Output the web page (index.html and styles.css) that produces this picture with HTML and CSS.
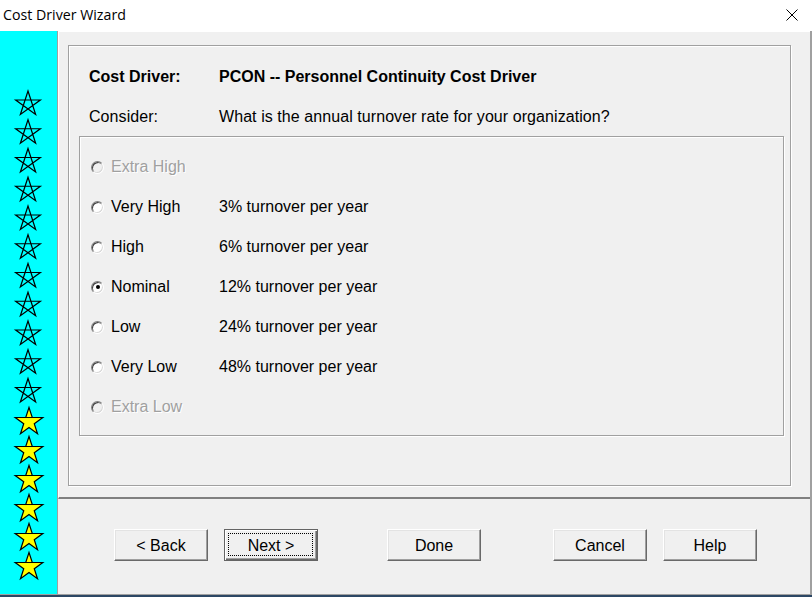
FILE: index.html
```html
<!DOCTYPE html>
<html>
<head>
<meta charset="utf-8">
<title>Cost Driver Wizard</title>
<link rel="stylesheet" href="styles.css">
</head>
<body>
<div class="window">
  <div class="titlebar">
    <span class="title">Cost Driver Wizard</span>
    <svg class="close" width="12" height="12" viewBox="0 0 12 12"><path d="M0.5 0.5 L11.5 11.5 M11.5 0.5 L0.5 11.5" stroke="#000" stroke-width="1" fill="none"/></svg>
  </div>
  <div class="body">
    <div class="sidebar">
      <svg class="stars" width="57" height="563" viewBox="0 0 57 563">
        <defs>
          <g id="ostar"><path d="M0,-13 L7.64,10.52 L-12.36,-4.02 L12.36,-4.02 L-7.64,10.52 Z" fill="none" stroke="#000" stroke-width="1.2" stroke-linejoin="miter"/></g>
          <g id="ystar"><path d="M0,-14.5 L3.26,-4.48 L13.79,-4.48 L5.27,1.71 L8.52,11.73 L0,5.54 L-8.52,11.73 L-5.27,1.71 L-13.79,-4.48 L-3.26,-4.48 Z" fill="#ffff00" stroke="#000" stroke-width="1.2"/><path d="M-13.3,-4.48 H13.3" stroke="#000" stroke-width="1"/></g>
        </defs>
        <use href="#ostar" transform="translate(28,73)"/>
        <use href="#ostar" transform="translate(28,101.75)"/>
        <use href="#ostar" transform="translate(28,130.5)"/>
        <use href="#ostar" transform="translate(28,159.25)"/>
        <use href="#ostar" transform="translate(28,188)"/>
        <use href="#ostar" transform="translate(28,216.75)"/>
        <use href="#ostar" transform="translate(28,245.5)"/>
        <use href="#ostar" transform="translate(28,274.25)"/>
        <use href="#ostar" transform="translate(28,303)"/>
        <use href="#ostar" transform="translate(28,331.75)"/>
        <use href="#ostar" transform="translate(28,360.5)"/>
        <use href="#ystar" transform="translate(29,391)"/>
        <use href="#ystar" transform="translate(29,420)"/>
        <use href="#ystar" transform="translate(29,449)"/>
        <use href="#ystar" transform="translate(29,478)"/>
        <use href="#ystar" transform="translate(29,507)"/>
        <use href="#ystar" transform="translate(29,536)"/>
      </svg>
    </div>
    <div class="main">
      <div class="panel">
        <div class="frame">
          <div class="row head"><span class="lbl">Cost Driver:</span><span>PCON -- Personnel Continuity Cost Driver</span></div>
          <div class="row"><span class="lbl">Consider:</span><span>What is the annual turnover rate for your organization?</span></div>
          <div class="group">
            <div class="opt disabled"><span class="radio"></span><span class="name">Extra High</span></div>
            <div class="opt"><span class="radio"></span><span class="name">Very High</span><span>3% turnover per year</span></div>
            <div class="opt"><span class="radio"></span><span class="name">High</span><span>6% turnover per year</span></div>
            <div class="opt"><span class="radio checked"></span><span class="name">Nominal</span><span>12% turnover per year</span></div>
            <div class="opt"><span class="radio"></span><span class="name">Low</span><span>24% turnover per year</span></div>
            <div class="opt"><span class="radio"></span><span class="name">Very Low</span><span>48% turnover per year</span></div>
            <div class="opt disabled"><span class="radio"></span><span class="name">Extra Low</span></div>
          </div>
        </div>
      </div>
      <div class="buttons">
        <button class="btn">&lt; Back</button>
        <button class="btn default">Next &gt;</button>
        <button class="btn done">Done</button>
        <button class="btn cancel">Cancel</button>
        <button class="btn help">Help</button>
      </div>
    </div>
  </div>
</div>
</body>
</html>
```

FILE: styles.css
```css
html, body {
  margin: 0;
  padding: 0;
}
body {
  width: 812px;
  height: 597px;
  overflow: hidden;
  background: #f0f0f0;
  font-family: "Liberation Sans", Arial, sans-serif;
  font-size: 16px;
  color: #000;
}
.window {
  height: 597px;
  display: flex;
  flex-direction: column;
}
.titlebar {
  height: 31px;
  flex: none;
  background: #fff;
  display: flex;
  align-items: center;
  justify-content: space-between;
}
.title {
  font-family: "Open Sans", "Noto Sans", sans-serif;
  font-size: 14.2px;
  padding-left: 3px;
  margin-top: -2px;
}
.close {
  margin-right: 14px;
  margin-top: -2px;
}
.body {
  flex: 1;
  display: flex;
  border-bottom: 1px solid #a0a0a0;
  box-shadow: 0 2px 0 #2c4764;
  margin-bottom: 2px;
}
.sidebar {
  width: 57px;
  flex: none;
  background: #00ffff;
  border-right: 1px solid #a0a0a0;
}
.stars {
  display: block;
}
.main {
  flex: 1;
  display: flex;
  flex-direction: column;
  border-right: 2px solid #a0a0a0;
}
.panel {
  height: 468px;
  flex: none;
  box-sizing: border-box;
  border-top: 1px solid #fff;
  border-left: 1px solid #fff;
  border-bottom: 2px solid #808080;
  padding: 13px 19px 11px 9px;
}
.frame {
  height: 441px;
  box-sizing: border-box;
  border: 1px solid #a0a0a0;
  box-shadow: inset 1px 1px #fff, 1px 1px #fff;
  padding: 21px 6px 0 10px;
}
.row {
  display: flex;
  line-height: 20px;
  padding-left: 10px;
  white-space: nowrap;
}
.row + .row {
  margin-top: 20px;
  letter-spacing: 0.07px;
}
.head {
  font-weight: bold;
}
.lbl {
  width: 130px;
  flex: none;
}
.group {
  margin-top: 9px;
  height: 300px;
  box-sizing: border-box;
  border: 1px solid #a0a0a0;
  box-shadow: inset 1px 1px #fff, 1px 1px #fff;
  padding: 10px 0 0 11px;
}
.opt {
  display: flex;
  align-items: center;
  height: 40px;
  white-space: nowrap;
}
.radio {
  position: relative;
  width: 13px;
  height: 13px;
  flex: none;
  box-sizing: border-box;
  border-radius: 50%;
  background: #fff;
  border: 1px solid;
  border-color: #808080 #fff #fff #808080;
  box-shadow: inset 1px 1px #404040, inset -1px -1px #d8d8d8;
  margin-right: 7px;
}
.radio.checked::after {
  content: "";
  position: absolute;
  left: 3.5px;
  top: 3.5px;
  width: 4px;
  height: 4px;
  border-radius: 50%;
  background: #000;
}
.name {
  width: 108px;
  flex: none;
}
.disabled .radio {
  background: #f0f0f0;
}
.disabled .name {
  color: #a0a0a0;
  text-shadow: 1px 1px #fff;
}
.buttons {
  flex: 1;
  display: flex;
  align-items: flex-start;
  padding: 30px 0 0 56px;
}
.btn {
  position: relative;
  width: 94px;
  height: 32px;
  box-sizing: border-box;
  font-family: "Liberation Sans", Arial, sans-serif;
  font-size: 16px;
  color: #000;
  background: #f0f0f0;
  border: 1px solid;
  border-color: #fff #696969 #696969 #fff;
  box-shadow: inset -1px -1px #a0a0a0, inset 1px 1px #e3e3e3;
  padding: 1px 0 0 0;
  margin: 0;
  flex: none;
}
.btn.default {
  margin-left: 16px;
  border: 1px solid #646464;
  box-shadow: inset 1px 1px #fff, inset -1px -1px #696969, inset -2px -2px #a0a0a0;
}
.btn.default::after {
  content: "";
  position: absolute;
  left: 3px;
  top: 3px;
  right: 4px;
  bottom: 4px;
  border: 1px dotted #000;
}
.btn.done {
  margin-left: 69px;
}
.btn.cancel {
  margin-left: 72px;
}
.btn.help {
  margin-left: 16px;
}
```
